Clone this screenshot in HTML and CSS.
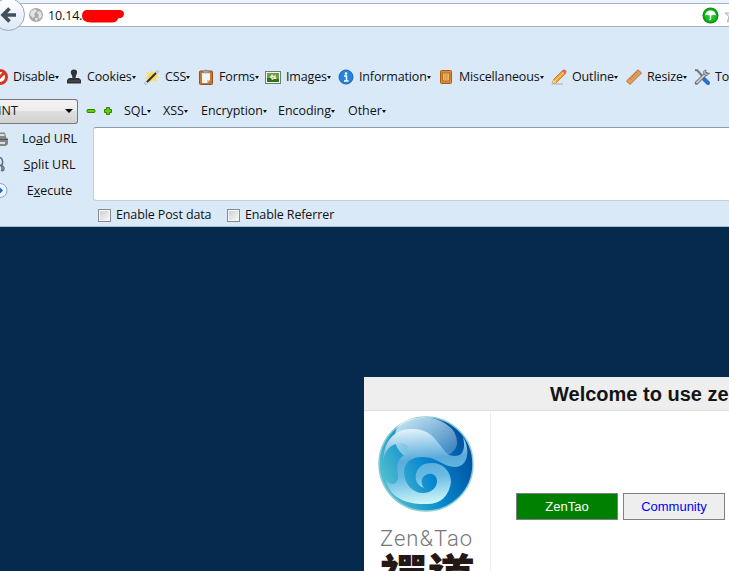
FILE: index.html
```html
<!DOCTYPE html>
<html lang="en">
<head>
<meta charset="utf-8">
<title>ZenTao</title>
<link rel="stylesheet" href="styles.css">
</head>
<body>
<header class="chrome">
  <div class="address">
    <svg class="back" width="26" height="32" viewBox="0 0 26 32"><defs><linearGradient id="bk" x2="0" y2="1"><stop stop-color="#fff"/><stop offset="1" stop-color="#dce8f5"/></linearGradient></defs><circle cx="8.5" cy="15.5" r="16" fill="url(#bk)" stroke="#97a6b8"/><path d="M16 16H4M9.500 9.500L3 16L9.500 22.500" fill="none" stroke="#424f5e" stroke-width="3.6"/></svg>
    <svg class="globe" width="14" height="14" viewBox="0 0 14 14"><circle cx="7" cy="7" r="7" fill="#a9a9a9"/><path d="M2 3L6 1L8 3L5 6L6 8L4 10L1 7ZM9 3L12 4L13 8L11 11L9 9L10 7L8 5ZM6 10L9 10L8 13L6 12Z" fill="#e3e3e3"/></svg>
    <span class="url">10.14.</span>
    <svg class="mark" width="44" height="16" viewBox="0 0 44 16"><path d="M5 2H38Q43 2 43 6Q43 10 37 10.500Q36 14.500 31 14.500H10Q1 14 1 8Q1 3 5 2Z" fill="red"/></svg>
    <svg class="shield" width="17" height="17" viewBox="0 0 17 17"><defs><radialGradient id="gr"><stop stop-color="#29dc2c"/><stop offset=".7" stop-color="#16ba1a"/><stop offset="1" stop-color="#087f12"/></radialGradient></defs><circle cx="8.500" cy="8.500" r="8" fill="url(#gr)"/><path d="M3 8.500Q4 3.500 8.500 3.500Q13 3.500 14 8.500L12 7.800L9.200 8.500V12.500Q8.500 14 7 12.800L7.800 12V8.500L5 7.800Z" fill="#fff"/></svg>
    <svg class="star" width="16" height="16" viewBox="0 0 16 16"><path d="M8 1L10 6H15L11 9.500L12.500 15L8 12L3.500 15L5 9.500L1 6H6Z" fill="#f5f5f5" stroke="#aaa"/></svg>
  </div>

  <nav class="tools">
    <div class="tool"><svg viewBox="0 0 16 16"><circle cx="8" cy="8" r="6.500" fill="#fff" stroke="#d83522" stroke-width="3"/><path d="M3.500 12.500L12.500 3.500" stroke="#d83522" stroke-width="3"/></svg><span>Disable</span><i></i></div>
    <div class="tool"><svg viewBox="0 0 16 16"><path d="M8 .5C4.300 .5 4.300 4 6 6.500L6.500 9H3L1 11V14.500H15V11L13 9H9.500L10 6.500C11.700 4 11.700 .5 8 .5Z" fill="#303236"/><path d="M2 12H14" stroke="#555"/></svg><span>Cookies</span><i></i></div>
    <div class="tool"><svg viewBox="0 0 16 16"><path d="M8 1L9.500 4L13 2L12 6L16 8L12 9L13 13L9 11L6 14L5 10L1 10L4 7L2 3L6 4Z" fill="#fbdc62"/><path d="M1 15L14 2" stroke="#333" stroke-width="2.200"/><path d="M1 15L3 13M12 4L14 2" stroke="#ddd" stroke-width="2"/></svg><span>CSS</span><i></i></div>
    <div class="tool"><svg viewBox="0 0 16 16"><rect x="1.500" y="2" width="13" height="13.500" rx="1" fill="#c87432" stroke="#9d501b"/><path d="M4 4H12V11L9 14H4Z" fill="#f5f5f2"/><path d="M9 14V11H12" fill="#ccc"/><path d="M5 4V2H7Q8 -1 9 2H11V4Z" fill="#aaa" stroke="#777" stroke-width=".5"/></svg><span>Forms</span><i></i></div>
    <div class="tool"><svg viewBox="0 0 16 16"><rect x=".5" y="2.500" width="15" height="12" fill="#f5f5f5" stroke="#777"/><rect x="2" y="4" width="12" height="9" fill="#65a33e"/><path d="M2 9Q7 8 14 10V13H2Z" fill="#2d751b"/><path d="M4 8L6 7L7 5L8.500 7L11 6L10.500 8L12 10L9 10L7 11L6 9Z" fill="#eef0e2"/><circle cx="8" cy="8.500" r="1" fill="#d7be45"/></svg><span>Images</span><i></i></div>
    <div class="tool"><svg viewBox="0 0 16 16"><circle cx="8" cy="8" r="7" fill="#2482dc" stroke="#1766b8"/><circle cx="8" cy="4.500" r="1.300" fill="#fff"/><path d="M6 7H8.500V12M6 12H10.500" fill="none" stroke="#fff" stroke-width="1.500"/></svg><span>Information</span><i></i></div>
    <div class="tool"><svg viewBox="0 0 16 16"><rect x="2.500" y="1.500" width="11" height="13" rx="1" fill="#d98b3c" stroke="#a65c13"/><rect x="4.500" y="4" width="7" height="8" fill="#efb56b" stroke="#b96e22"/><path d="M6 6H10M6 8H10M6 10H10" stroke="#d59347"/></svg><span>Miscellaneous</span><i></i></div>
    <div class="tool"><svg viewBox="0 0 16 16"><path d="M3 15H12" stroke="#aaa"/><path d="M1 15L2.500 10.500L11.500 1.500L14.500 4.500L5.500 13.500Z" fill="#f4a32d" stroke="#a96520" stroke-width=".7"/><path d="M1 15L2.500 10.500L5.500 13.500Z" fill="#eed1a8"/><path d="M11 2L12.500 .5Q14 0 15.500 2Q16 3 14 5Z" fill="#d96674"/><path d="M4 12L12.500 3.500" stroke="#ffd67b"/></svg><span>Outline</span><i></i></div>
    <div class="tool"><svg viewBox="0 0 16 16"><path d="M.5 12L12 .8L15.500 4L4 15.500Z" fill="#dfa05c" stroke="#b66b29"/><path d="M4 9L5.500 10.500M6 7L7.500 8.500M8 5L9.500 6.500M10 3L11.500 4.500" stroke="#9b622f" stroke-width=".7"/></svg><span>Resize</span><i></i></div>
    <div class="tool"><svg viewBox="0 0 16 16"><path d="M1 1L3.500 1.500L9 8" fill="none" stroke="#777" stroke-width="2"/><path d="M9 9L14 14" stroke="#2b70cd" stroke-width="4" stroke-linecap="round"/><path d="M2.500 14L12 4.500" stroke="#656a70" stroke-width="3.500" stroke-linecap="round"/><path d="M2.500 14L12 4.500" stroke="#c8ccd1" stroke-width="1.800"/><path d="M12 .8Q8 2 10 5Q13 8 15.500 4L12.800 4.500L11.500 3.300Z" fill="#c5c8cc" stroke="#656a70" stroke-width=".8"/></svg><span>Tools</span><i></i></div>
  </nav>

  <div class="hack">
    <div class="mode"><span>INT</span><b></b></div>
    <svg class="sign" viewBox="0 0 10 10"><rect x="1" y="3.500" width="8" height="3" rx="1" fill="#60cf13" stroke="#328100"/></svg>
    <svg class="sign plus" viewBox="0 0 10 10"><path d="M3.500 1.500H6.500V3.500H8.500V6.500H6.500V8.500H3.500V6.500H1.500V3.500H3.500Z" fill="#60cf13" stroke="#328100"/></svg>
    <div class="menu sql"><span>SQL</span><i></i></div>
    <div class="menu xss"><span>XSS</span><i></i></div>
    <div class="menu encr"><span>Encryption</span><i></i></div>
    <div class="menu enco"><span>Encoding</span><i></i></div>
    <div class="menu"><span>Other</span><i></i></div>
  </div>

  <div class="request">
    <div class="actions">
      <div><svg viewBox="0 0 8 16"><path d="M0 1.500H5L6 6L8 8V13L6 15H0Z" fill="#858585"/><path d="M0 4H4.500M0 12H5" stroke="#ddd" stroke-width="2"/><path d="M0 8.500H8" stroke="#555"/></svg><span>Lo<u>a</u>d URL</span></div>
      <div><svg viewBox="0 0 8 16"><path d="M0 0Q4 3 2 8M0 9L2 7V14M1 10Q4 8 4 12Q3 15 1 13" fill="none" stroke="#56717f" stroke-width="1.500"/></svg><span><u>S</u>plit URL</span></div>
      <div><svg viewBox="0 0 8 16"><circle cx="0" cy="7.500" r="7" fill="#eef6ff" stroke="#7fa5d5"/><path d="M0 4.500L3 7.500L0 10.500Z" fill="#2267bb"/></svg><span>E<u>x</u>ecute</span></div>
    </div>
    <div class="payload">
      <div class="box"></div>
      <div class="checks"><b></b><span class="post">Enable Post data</span><b></b><span class="ref">Enable Referrer</span></div>
    </div>
  </div>
</header>

<main class="page">
  <section class="card">
    <h1>Welcome to use zentao!</h1>
    <div class="body">
      <div class="brand">
        <svg class="orb" width="96" height="96" viewBox="0 0 96 96">
          <defs>
            <linearGradient id="o" x1="0" y1=".75" x2="1" y2=".3"><stop stop-color="#5ac6cf"/><stop offset=".5" stop-color="#0787ce"/><stop offset="1" stop-color="#004b9b"/></linearGradient>
            <linearGradient id="v" gradientUnits="userSpaceOnUse" x1="35" y1="12" x2="42" y2="88"><stop stop-color="#e6f5fb"/><stop offset=".42" stop-color="#58aadb"/><stop offset=".65" stop-color="#69bce3"/><stop offset="1" stop-color="#cdf6f8"/></linearGradient>
            <linearGradient id="g" x2=".7" y2="1"><stop stop-color="#fff" stop-opacity=".8"/><stop offset="1" stop-color="#fff" stop-opacity=".25"/></linearGradient>
          </defs>
          <circle cx="48" cy="48" r="47" fill="url(#o)" stroke="#8bcfd2" stroke-width="1.500"/>
          <path d="M17 20Q17 5 38 2Q55 -1 68 8Q80 16 79 28Q78 35 70 39H25Q16 31 17 20Z" fill="url(#g)"/>
          <path d="M5 46C6 25 16 13 33 13C50 13 55 20 62 29C68 37 70 40 77 40C87 40 87 29 85 21C93 34 90 51 77 51C65 51 59 41 45 41C32 41 26 47 26 57C27 69 35 77 45 77C54 77 59 71 59 65C59 59 54 57 50 58C43 60 42 67 46 72C38 69 37 63 38 58C40 50 46 47 54 47C65 47 73 55 73 66C71 80 63 88 49 88C28 89 11 81 8 64C13 70 19 69 20 62C20 56 18 51 20 46C23 39 31 38 30 32C29 26 19 26 12 31C7 36 6 40 5 46Z" fill="url(#v)"/>
        </svg>
        <div class="latin">Zen&amp;Tao</div>
        <div class="han">禪道</div>
      </div>
      <div class="links"><a class="on">ZenTao</a><a>Community</a></div>
    </div>
  </section>
</main>
</body>
</html>
```
FILE: styles.css
```css
* { box-sizing: border-box; }
html { overflow: hidden; }
body { margin: 0; width: 729px; height: 571px; overflow: hidden; background: #062a4d; font: 12.5px/18px "Open Sans", "Noto Sans", sans-serif; color: #111; }
svg { display: block; flex: none; }
.chrome { height: 227px; padding-top: 3px; background: #dae9f8; border-bottom: 1px solid #a9bdd2; overflow: hidden; }
.address { height: 24px; background: #fff; border: solid #a3b4c8; border-width: 1px 0; display: flex; align-items: center; box-shadow: 0 -4px #eaf3fb; }
.back { margin: 0 3px 0 0; }
.globe { margin-right: 5px; }
.url { width: 33px; white-space: nowrap; letter-spacing: -.15px; padding-top: 1px; }
.mark { margin-top: 1px; }
.shield { margin-left: 577px; }
.star { margin-left: 5px; }
.tools { display: grid; grid-template-columns: 74px 78px 54px 67px 73px 100px 113px 75px 68px 60px; margin: 41px 0 0 -8px; height: 18px; }
.tool { display: flex; align-items: center; white-space: nowrap; letter-spacing: -.15px; }
.tool svg { width: 16px; height: 16px; margin-right: 5px; }
i { border: solid transparent; border-width: 3px 2.5px 0; border-top-color: #111; flex: none; }
.hack { height: 26px; margin-top: 12px; display: flex; align-items: center; }
.mode { width: 78px; height: 25px; margin-right: 8px; border: 1px solid #777; border-left: 0; border-radius: 0 3px 3px 0; background: linear-gradient(#f3f3f3, #ececec 48%, #dedede 50%, #d2d2d2); display: flex; align-items: center; justify-content: space-between; padding-right: 4px; }
.mode span { margin-left: -2px; }
.mode b { border: solid transparent; border-width: 4px 4px 0; border-top-color: #000; }
.sign { width: 10px; height: 10px; margin-right: 7px; }
.sign.plus { margin-right: 11px; }
.menu { display: flex; align-items: center; letter-spacing: -.05px; }
.sql { width: 39px; }
.xss { width: 38px; }
.encr { width: 77px; }
.enco { width: 70px; }
.request { display: flex; margin-top: 3px; }
.actions { width: 93px; margin-top: -1px; }
.actions div { height: 26px; display: flex; align-items: center; }
.actions svg { width: 8px; height: 16px; }
.actions span { flex: 1; text-align: center; padding-right: 2px; }
.payload { flex: 1; }
.box { height: 74px; background: #fff; border: 1px solid #c5cfda; border-top-color: #8e9cab; border-right: 0; border-radius: 3px 0 0 3px; }
.checks { display: flex; align-items: center; height: 28px; padding-left: 5px; letter-spacing: -.12px; }
.checks b { width: 13px; height: 13px; border: 1px solid #858b91; background: linear-gradient(135deg, #c9cdd2, #fafafa); box-shadow: inset 0 0 0 1px #f4f4f4; margin-right: 5px; }
.post { width: 111px; }
.page { padding: 150px 0 0 364px; }
.card { height: 194px; background: #fff; overflow: hidden; }
h1 { margin: 0; padding-left: 186px; height: 34px; font: bold 20px/34px "Liberation Sans", sans-serif; background: #eee; border-bottom: 1px solid #ddd; color: #141414; white-space: nowrap; }
.body { display: flex; height: 160px; overflow: hidden; }
.brand { width: 127px; border-right: 1px solid #eee; padding: 5px 0 0 14px; flex: none; }
.latin { margin: 14px 0 0 2px; font: 300 22px/26px Roboto, "Liberation Sans", sans-serif; letter-spacing: 1px; color: #777; white-space: nowrap; }
.han { margin: 8px 0 0 2px; font: 900 47.5px/28px "Noto Sans CJK TC", sans-serif; color: #231815; white-space: nowrap; }
.links { display: flex; gap: 5px; padding: 82px 0 0 25px; }
.links a { width: 102px; height: 27px; flex: none; border: 1px solid #808080; background: #eee; color: #00f; font: 13px/25px "Liberation Sans", sans-serif; text-align: center; }
.links .on { background: #008000; color: #fff; }
```
